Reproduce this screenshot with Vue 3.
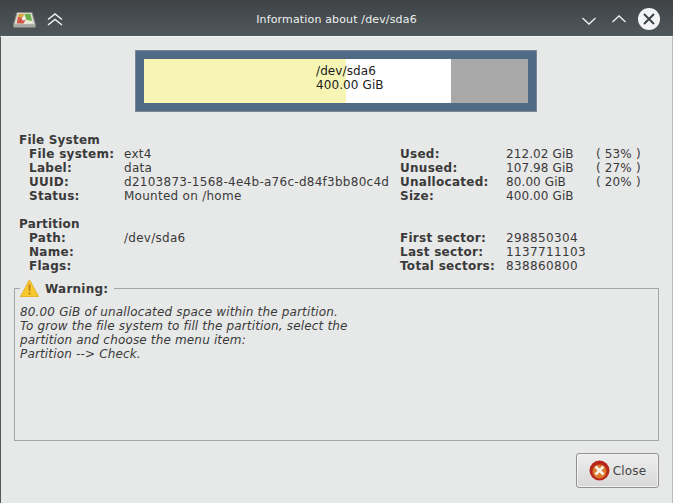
<script setup>
const fsRows = [
  ['File system:', 'ext4'],
  ['Label:', 'data'],
  ['UUID:', 'd2103873-1568-4e4b-a76c-d84f3bb80c4d'],
  ['Status:', 'Mounted on /home'],
]
const usage = [
  ['Used:', '212.02 GiB', '( 53% )'],
  ['Unused:', '107.98 GiB', '( 27% )'],
  ['Unallocated:', '80.00 GiB', '( 20% )'],
  ['Size:', '400.00 GiB', ''],
]
const partRows = [
  ['Path:', '/dev/sda6'],
  ['Name:', ''],
  ['Flags:', ''],
]
const sectors = [
  ['First sector:', '298850304'],
  ['Last sector:', '1137711103'],
  ['Total sectors:', '838860800'],
]
</script>

<template>
  <div class="window">
    <header class="titlebar">
      <div class="tb-left">
        <svg class="app-icon" width="23" height="16" viewBox="0 0 23 16">
          <path d="M4 .5h15l3.500 12.500H.5z" fill="#d8d8d2" stroke="#8b8b85" />
          <path d="M.5 13h22v2.500H.5z" fill="#a9a9a3" />
          <path d="M5.500 2h12l2 9.500H3.500z" fill="#eceada" />
          <path d="M11.500 2h6l1.500 7-5.500-1z" fill="#6cb04a" />
          <path d="M5.500 2h6l-2 3.500-4.500-.5z" fill="#d9a63f" />
          <path d="M4.800 5l4.700.5 3 2.500-2 3.500H3.800z" fill="#d0574a" />
          <circle cx="10.500" cy="6.800" r="1.700" fill="#f3f3ea" />
        </svg>
        <svg class="chev-up" width="16" height="13" viewBox="0 0 16 13" fill="none" stroke="#f0f2f2" stroke-width="1.500">
          <path d="M1 6.500 8 1l7 5.500M1 12 8 6.500l7 5.500" />
        </svg>
      </div>
      <div class="title">Information about /dev/sda6</div>
      <div class="tb-right">
        <svg class="win-down" width="14" height="8" viewBox="0 0 14 8" fill="none" stroke="#f0f2f2" stroke-width="1.300"><path d="M.5 1 7 7l6.500-6" /></svg>
        <svg class="win-up" width="14" height="8" viewBox="0 0 14 8" fill="none" stroke="#f0f2f2" stroke-width="1.300"><path d="M.5 7 7 1l6.500 6" /></svg>
        <svg class="win-close" width="22" height="22" viewBox="0 0 22 22"><circle cx="11" cy="11" r="11" fill="#f1f3f4" /><path d="M6 6l10 10M16 6 6 16" stroke="#3c4247" stroke-width="2" /></svg>
      </div>
    </header>

    <main class="body">
      <div class="graph-wrap">
        <div class="graph">
          <div class="used"></div>
          <div class="unused"></div>
          <div class="unalloc"></div>
          <div class="graph-label">/dev/sda6<br />400.00 GiB</div>
        </div>
      </div>

      <section class="info first">
        <div class="col-left">
          <div class="heading">File System</div>
          <div v-for="r in fsRows" :key="r[0]" class="row">
            <span class="key">{{ r[0] }}</span><span class="val">{{ r[1] }}</span>
          </div>
        </div>
        <div class="col-right top-pad">
          <div v-for="r in usage" :key="r[0]" class="row-r">
            <span class="key-r">{{ r[0] }}</span><span class="val-r">{{ r[1] }}</span><span class="pct">{{ r[2] }}</span>
          </div>
        </div>
      </section>

      <section class="info second">
        <div class="col-left">
          <div class="heading">Partition</div>
          <div v-for="r in partRows" :key="r[0]" class="row">
            <span class="key">{{ r[0] }}</span><span class="val">{{ r[1] }}</span>
          </div>
        </div>
        <div class="col-right top-pad">
          <div v-for="r in sectors" :key="r[0]" class="row-r">
            <span class="key-r">{{ r[0] }}</span><span class="val-r num">{{ r[1] }}</span>
          </div>
        </div>
      </section>

      <fieldset class="warning">
        <legend>
          <svg width="19" height="18" viewBox="0 0 19 18">
            <path d="M9.500 .8 18.500 17.500H.5z" fill="#f6c92f" stroke="#e6b428" stroke-linejoin="round" />
            <path d="M8.500 5.500h2l-.4 6.800H8.900z" fill="#c07a20" />
            <circle cx="9.500" cy="14.500" r="1.100" fill="#c07a20" />
          </svg>
          <b>Warning:</b>
        </legend>
        <p>80.00 GiB of unallocated space within the partition.<br />To grow the file system to fill the partition, select the<br />partition and choose the menu item:<br />Partition --&gt; Check.</p>
      </fieldset>

      <div class="actions">
        <button class="close">
          <svg width="21" height="21" viewBox="0 0 21 21">
            <circle cx="10.500" cy="10.500" r="10" fill="#b8261c" />
            <circle cx="10.500" cy="11.500" r="7" fill="#d9772a" />
            <path d="M6.500 6.500l8 8M14.500 6.500l-8 8" stroke="#f6f2ea" stroke-width="2.800" />
          </svg>
          <span>Close</span>
        </button>
      </div>
    </main>
  </div>
</template>

<style>
html, body { margin: 0; background: #e8e8e8; }
</style>

<style scoped>
.window {
  width: 673px;
  height: 503px;
  display: flex;
  flex-direction: column;
  font-family: "DejaVu Sans", sans-serif;
  font-size: 12px;
  line-height: 14px;
  color: #3a3a3a;
  overflow: hidden;
}
.titlebar {
  height: 36px;
  flex: none;
  display: flex;
  align-items: center;
  justify-content: space-between;
  position: relative;
  background: linear-gradient(#3f4346, #50585c);
  color: #eef0f0;
  padding: 0 13px;
  box-sizing: border-box;
}
.tb-left { display: flex; align-items: center; gap: 11px; padding-top: 3px; }
.tb-right { display: flex; align-items: center; padding-top: 2px; }
.win-down { margin-top: 3px; }
.win-up { margin-left: 16px; margin-right: 12px; }
.title {
  position: absolute;
  left: 0;
  right: 0;
  top: 13px;
  text-align: center;
  font-size: 11px;
  letter-spacing: 0.15px;
}
.body {
  flex: 1;
  background: #e7e8e8;
  border-top: 1px solid #f3f4f4;
  border-left: 1px solid #55595c;
  border-right: 1px solid #b9bcbd;
  display: flex;
  flex-direction: column;
  min-height: 0;
  padding: 0 13px;
}
.graph-wrap { display: flex; justify-content: center; padding-top: 13px; margin-left: -1px; }
.graph {
  width: 384px;
  height: 44px;
  border: 9px solid #4f6a85;
  outline: 1px solid #7b8894;
  outline-offset: -1px;
  display: flex;
  position: relative;
  color: #1c1c1c;
}
.used { width: 202px; background: #f6f5b4; }
.unused { width: 105px; background: #fff; }
.unalloc { flex: 1; background: #a9a9a9; }
.graph-label { position: absolute; left: 172px; top: 5px; letter-spacing: 0.1px; }
.info { display: flex; }
.first { margin-top: 21px; }
.second { margin-top: 14px; }
.col-left { width: 386px; padding-left: 5px; flex: none; box-sizing: border-box; }
.col-right { flex: 1; }
.top-pad { padding-top: 14px; }
.heading { font-weight: bold; letter-spacing: 0.2px; }
.row { display: flex; padding-left: 10px; white-space: nowrap; }
.key, .key-r { font-weight: bold; letter-spacing: 0.28px; }
.key { width: 95px; flex: none; }
.val { letter-spacing: 0.27px; }
.row-r { display: flex; white-space: nowrap; }
.key-r { width: 106px; flex: none; }
.val-r { width: 90px; flex: none; letter-spacing: 0.1px; }
.val-r.num { letter-spacing: 0.36px; }
.pct { letter-spacing: 0.15px; }
.warning {
  margin: 5px 0 0;
  padding: 0 5px;
  height: 163px;
  box-sizing: border-box;
  border: 1px solid #a5a8a8;
  min-width: 0;
}
.warning legend {
  display: flex;
  align-items: center;
  gap: 6px;
  padding: 0 6px 0 0;
  height: 20px;
}
.warning b { font-size: 12px; letter-spacing: 0.25px; margin-top: 1px; }
.warning p { margin: 0; padding-top: 7px; font-style: italic; letter-spacing: 0.16px; }
.actions { display: flex; justify-content: flex-end; padding-top: 12px; }
.close {
  width: 83px;
  height: 35px;
  display: flex;
  align-items: center;
  justify-content: center;
  gap: 3px;
  padding: 0;
  background: linear-gradient(#eeeeee, #d8d8d8);
  border: 1px solid #8f9192;
  border-radius: 3px;
  box-shadow: inset 0 0 0 1px #f4f4f4;
  font: 12px "DejaVu Sans", sans-serif;
  letter-spacing: 0.2px;
  color: #444;
}
</style>
